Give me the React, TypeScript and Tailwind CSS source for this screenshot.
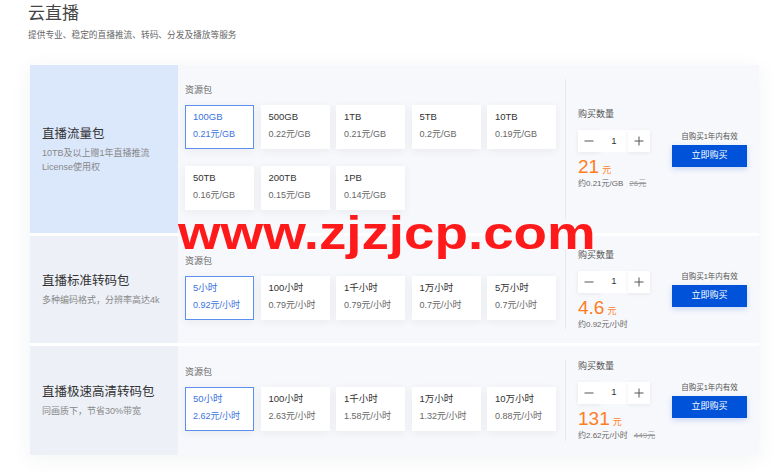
type Pkg = { name: string; price: string };

type Plan = {
  title: string;
  desc: string[];
  pkgs: Pkg[];
  total: string;
  per: string;
  orig?: string;
  leftBg: string;
  rowH: string;
  pad: string;
};

const plans: Plan[] = [
  {
    title: '直播流量包',
    desc: ['10TB及以上赠1年直播推流', 'License使用权'],
    pkgs: [
      { name: '100GB', price: '0.21元/GB' },
      { name: '500GB', price: '0.22元/GB' },
      { name: '1TB', price: '0.21元/GB' },
      { name: '5TB', price: '0.2元/GB' },
      { name: '10TB', price: '0.19元/GB' },
      { name: '50TB', price: '0.16元/GB' },
      { name: '200TB', price: '0.15元/GB' },
      { name: '1PB', price: '0.14元/GB' },
    ],
    total: '21',
    per: '约0.21元/GB',
    orig: '26元',
    leftBg: 'bg-[#dbe7fb]',
    rowH: 'h-[168px]',
    pad: 'pt-[19px]',
  },
  {
    title: '直播标准转码包',
    desc: ['多种编码格式，分辨率高达4k'],
    pkgs: [
      { name: '5小时', price: '0.92元/小时' },
      { name: '100小时', price: '0.79元/小时' },
      { name: '1千小时', price: '0.79元/小时' },
      { name: '1万小时', price: '0.7元/小时' },
      { name: '5万小时', price: '0.7元/小时' },
    ],
    total: '4.6',
    per: '约0.92元/小时',
    leftBg: 'bg-[#edf0f7]',
    rowH: 'h-[107px]',
    pad: 'pt-[19px]',
  },
  {
    title: '直播极速高清转码包',
    desc: ['同画质下，节省30%带宽'],
    pkgs: [
      { name: '50小时', price: '2.62元/小时' },
      { name: '100小时', price: '2.63元/小时' },
      { name: '1千小时', price: '1.58元/小时' },
      { name: '1万小时', price: '1.32元/小时' },
      { name: '10万小时', price: '0.88元/小时' },
    ],
    total: '131',
    per: '约2.62元/小时',
    orig: '449元',
    leftBg: 'bg-[#edf0f7]',
    rowH: 'h-[109px]',
    pad: 'pt-[20px]',
  },
];

function StepButton({ plus }: { plus?: boolean }) {
  return (
    <div className="flex h-[22px] w-[22px] items-center justify-center bg-white shadow-[0_1px_4px_rgba(30,50,90,0.08)]">
      <svg width="10" height="10" viewBox="0 0 10 10" fill="none" stroke="#555" strokeWidth="1">
        <line x1="0.5" y1="5" x2="9.5" y2="5" />
        {plus && <line x1="5" y1="0.5" x2="5" y2="9.5" />}
      </svg>
    </div>
  );
}

function PlanRow({ plan }: { plan: Plan }) {
  return (
    <div className={`flex ${plan.rowH}`}>
      <div className={`flex w-[148px] shrink-0 flex-col justify-center pl-[12px] ${plan.leftBg}`}>
        <div className="text-[12.5px] leading-[18px] text-[#333]">{plan.title}</div>
        <div className="mt-[3px] text-[9px] leading-[14px] text-[#888]">
          {plan.desc.map((d) => (
            <div key={d}>{d}</div>
          ))}
        </div>
      </div>

      <div className="flex flex-1 bg-[#f7f8fb]">
        <div className={`w-[387px] shrink-0 pl-[7px] ${plan.pad}`}>
          <div className="text-[9px] leading-[12px] text-[#666]">资源包</div>
          <div className="mt-[9px] grid grid-cols-[repeat(5,69px)] gap-x-[6.5px] gap-y-[17px]">
            {plan.pkgs.map((p, i) => (
              <div
                key={p.name}
                className={`h-[44px] border bg-white pl-[7px] pt-[5px] shadow-[0_2px_8px_rgba(30,50,90,0.07)] ${
                  i === 0 ? 'border-[#5b8ff0]' : 'border-transparent'
                }`}
              >
                <div className={`text-[9.5px] leading-[12px] ${i === 0 ? 'text-[#3b72e0]' : 'text-[#333]'}`}>
                  {p.name}
                </div>
                <div className={`mt-[5px] text-[9px] leading-[12px] ${i === 0 ? 'text-[#3b72e0]' : 'text-[#666]'}`}>
                  {p.price}
                </div>
              </div>
            ))}
          </div>
        </div>

        <div className="my-[14px] flex flex-1 items-center border-l border-[#e4e7ed] pl-[12px]">
          <div className="w-[72px]">
            <div className="text-[9px] leading-[12px] text-[#555]">购买数量</div>
            <div className="mt-[10px] flex h-[22px]">
              <StepButton />
              <div className="flex w-[28px] items-center justify-center bg-white text-[9.5px] text-[#333]">1</div>
              <StepButton plus />
            </div>
            <div className="mt-[4px] flex items-baseline whitespace-nowrap text-[#ff7d1f]">
              <span className="text-[19px] leading-[22px]">{plan.total}</span>
              <span className="ml-[3px] text-[9px]">元</span>
            </div>
            <div className="whitespace-nowrap text-[8px] leading-[12px] text-[#666]">
              {plan.per}
              {plan.orig && <span className="ml-[6px] text-[#999] line-through">{plan.orig}</span>}
            </div>
          </div>
          <div className="ml-[22px] flex w-[75px] flex-col items-center">
            <div className="whitespace-nowrap text-[7.5px] leading-[10px] text-[#555]">自购买1年内有效</div>
            <div className="mt-[3px] flex h-[22px] w-[75px] items-center justify-center bg-[#0052d9] text-[9px] text-white shadow-[0_2px_6px_rgba(0,82,217,0.2)]">
              立即购买
            </div>
          </div>
        </div>
      </div>
    </div>
  );
}

export default function App() {
  return (
    <div className="relative h-[472px] w-[780px] overflow-hidden bg-white font-['Liberation_Sans','Noto_Sans_CJK_SC',sans-serif]">
      <div className="pl-[28px] pt-[2px]">
        <h1 className="text-[17px] leading-[24px] text-[#444]">云直播</h1>
        <p className="mt-[3px] text-[8.7px] leading-[12px] text-[#666]">提供专业、稳定的直播推流、转码、分发及播放等服务</p>
      </div>

      <div className="ml-[30px] mt-[24px] flex w-[729px] flex-col gap-[3px] bg-white shadow-[0_4px_20px_rgba(30,50,90,0.06)]">
        {plans.map((p) => (
          <PlanRow key={p.title} plan={p} />
        ))}
      </div>

      <div className="absolute left-[178px] top-[210px] origin-left scale-x-[1.19] whitespace-nowrap font-['Liberation_Sans',sans-serif] text-[46px] font-bold leading-none text-[#fe1a1a]">
        www.zjzjcp.com
      </div>
    </div>
  );
}
